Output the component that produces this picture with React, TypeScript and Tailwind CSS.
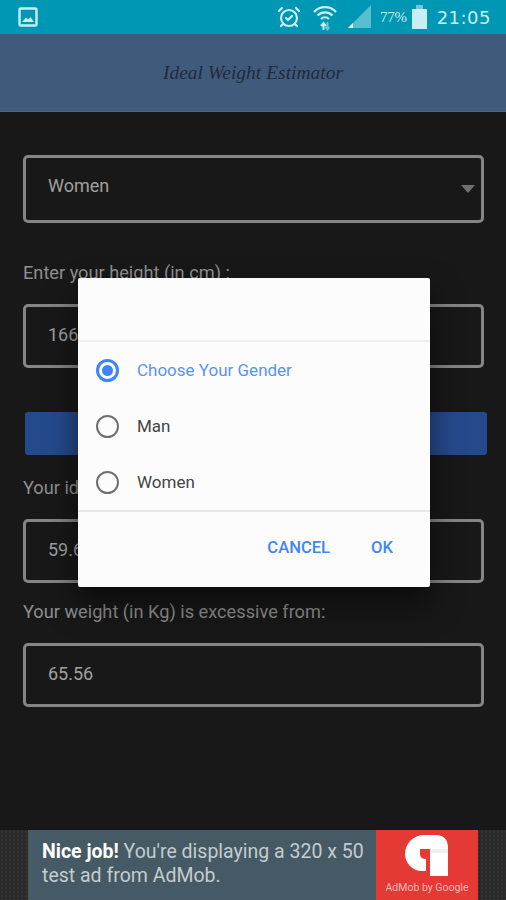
import { AlarmClockCheck } from 'lucide-react';

function ImageIcon() {
  return (
    <svg width="20" height="20" viewBox="0 0 20 20" fill="none">
      <rect x="1.5" y="1.5" width="17" height="17" rx="1.5" stroke="#c8eef4" strokeWidth="2.4" />
      <path d="M4 15 L8 10.5 L10 12.5 L12.5 10 L16 15 Z" fill="#c8eef4" />
    </svg>
  );
}

function WifiIcon() {
  return (
    <svg width="24" height="27" viewBox="0 0 24 27" fill="none" stroke="#c8eef4" strokeWidth="2.2">
      <path d="M1 8 A15 15 0 0 1 23 8" />
      <path d="M4.5 11.5 A10.5 10.5 0 0 1 19.5 11.5" />
      <path d="M8 15 A6 6 0 0 1 16 15" />
      <path d="M10.5 19 L10.5 26 M8 22 L10.5 19 L13 22" strokeWidth="2" />
      <path d="M14.5 18 L14.5 25 M12.5 23 L14.5 25.5 L16.5 23" strokeWidth="1.8" opacity="0.55" />
    </svg>
  );
}

function SignalIcon() {
  return (
    <svg width="24" height="24" viewBox="0 0 24 24">
      <path d="M23 0 V23 H0 Z" fill="#c8eef4" opacity="0.45" />
      <path d="M0 23 L5 18 V23 Z" fill="#e6f8fa" />
    </svg>
  );
}

function AdMobLogo() {
  return (
    <svg width="44" height="42" viewBox="0 0 44 42">
      <path
        d="M43 41 V13 Q43 0 30 0 H19 A19 19 0 0 0 0 19 A17 17 0 0 0 17 36 H21 V24 Q15 24 15 19 V14 H25 V41 Z"
        fill="#fff"
      />
      <rect x="25" y="14" width="18" height="4" fill="#eeeeee" />
    </svg>
  );
}

function Box({ value, className }: { value: string; className?: string }) {
  return (
    <div className={`flex h-[64px] items-center rounded-[5px] border-[3px] border-[#858585] pb-[4px] pl-[22px] text-[18px] text-[#a0a0a0] ${className ?? ''}`}>
      {value}
    </div>
  );
}

function Radio({ label, checked }: { label: string; checked?: boolean }) {
  return (
    <div className="flex h-[56px] items-center gap-[18px] pl-[18px]">
      {checked ? (
        <span className="flex h-[23px] w-[23px] items-center justify-center rounded-full border-[3px] border-[#3f86f5]">
          <span className="h-[11px] w-[11px] rounded-full bg-[#3f86f5]" />
        </span>
      ) : (
        <span className="h-[23px] w-[23px] rounded-full border-[2.5px] border-[#6f6f6f]" />
      )}
      <span className={`pt-[2px] text-[17px] ${checked ? 'text-[#5b93f2]' : 'text-[#444444]'}`}>{label}</span>
    </div>
  );
}

export default function App() {
  return (
    <div className="relative flex h-[900px] w-[506px] flex-col overflow-hidden bg-[#181818] font-['Roboto',sans-serif]">
      {/* status bar */}
      <div className="flex h-[34px] shrink-0 items-center justify-between bg-[#0097b4] pl-[18px] pr-[15px] text-[#c8eef4]">
        <ImageIcon />
        <div className="flex items-center">
          <AlarmClockCheck size={24} strokeWidth={2.2} color="#c8eef4" className="mr-[12px]" />
          <WifiIcon />
          <div className="ml-[11px] mr-[8px]">
            <SignalIcon />
          </div>
          <span className="font-['Liberation_Serif',serif] text-[15px] tracking-[-0.3px]">77%</span>
          <div className="relative mx-[5px] mt-[3px] h-[20px] w-[15px] bg-[#c8eef4]">
            <div className="absolute left-[4px] top-[-4px] h-[4px] w-[7px] bg-[#7cc4d3]" />
          </div>
          <span className="ml-[5px] font-['DejaVu_Sans',sans-serif] text-[18px] tracking-[0.5px]">21:05</span>
        </div>
      </div>

      {/* app bar */}
      <div className="flex h-[78px] shrink-0 items-center justify-center border-b border-[#4e6685] bg-[#405a7c]">
        <span className="font-['Liberation_Serif',serif] text-[19.5px] italic text-[#1f2a3d]">Ideal Weight Estimator</span>
      </div>

      {/* form */}
      <div className="flex flex-1 flex-col pl-[23px] pr-[22px] pt-[43px]">
        <div className="relative h-[68px] rounded-[5px] border-[3px] border-[#858585] pl-[22px] pt-[14px] text-[18px] text-[#a0a0a0]">
          Women
          <div className="absolute right-[6px] top-[27px] h-0 w-0 border-x-[7px] border-t-[8px] border-x-transparent border-t-[#6f6f6f]" />
        </div>
        <div className="mt-[37px] h-[24px] pt-[1px] text-[18.2px] leading-[24px] text-[#8f8f8f]">Enter your height (in cm) :</div>
        <Box value="166" className="mt-[20px]" />
        <div className="ml-[2px] mr-[-3px] mt-[44px] h-[43px] rounded-[3px] bg-[#254a8c]" />
        <div className="mt-[20px] h-[24px] pt-[1px] text-[18.2px] leading-[24px] text-[#8f8f8f]">Your ideal weight (in Kg) is:</div>
        <Box value="59.60" className="mt-[20px]" />
        <div className="mt-[16px] h-[24px] pt-[1px] text-[18.2px] leading-[24px] text-[#8f8f8f]">Your weight (in Kg) is excessive from:</div>
        <Box value="65.56" className="mt-[20px]" />
      </div>

      {/* ad banner */}
      <div className="flex h-[70px] shrink-0 justify-center bg-[#2a2a2a] bg-[radial-gradient(#343434_1px,transparent_1px)] bg-[length:4px_4px]">
        <div className="flex w-[450px] bg-[#455a64]">
          <div className="w-[348px] pl-[14px] pt-[10px] text-[19.5px] leading-[24px] text-[#c3ccd0]">
            <div className="whitespace-nowrap">
              <span className="font-bold text-white">Nice job!</span>
              <span> You're displaying a 320 x 50</span>
            </div>
            <div className="whitespace-nowrap">test ad from AdMob.</div>
          </div>
          <div className="flex w-[102px] flex-col items-center bg-[#e53935] pt-[5px]">
            <AdMobLogo />
            <span className="mt-[4px] text-[10.5px] leading-[14px] text-[#f5b7b4]">AdMob by Google</span>
          </div>
        </div>
      </div>

      {/* gender dialog */}
      <div className="absolute left-[78px] top-[278px] flex h-[309px] w-[352px] flex-col rounded-[2px] bg-[#fcfcfc] shadow-[0_16px_32px_rgba(0,0,0,0.55)]">
        <div className="h-[64px] shrink-0 border-b-2 border-[#eeeeee]" />
        <div className="flex flex-col">
          <Radio label="Choose Your Gender" checked />
          <Radio label="Man" />
          <Radio label="Women" />
        </div>
        <div className="flex flex-1 items-center justify-end gap-[41px] border-t-2 border-[#e8e8e8] pb-[2px] pr-[37px] text-[16.6px] font-medium text-[#3f86f5]">
          <span>CANCEL</span>
          <span>OK</span>
        </div>
      </div>
    </div>
  );
}
